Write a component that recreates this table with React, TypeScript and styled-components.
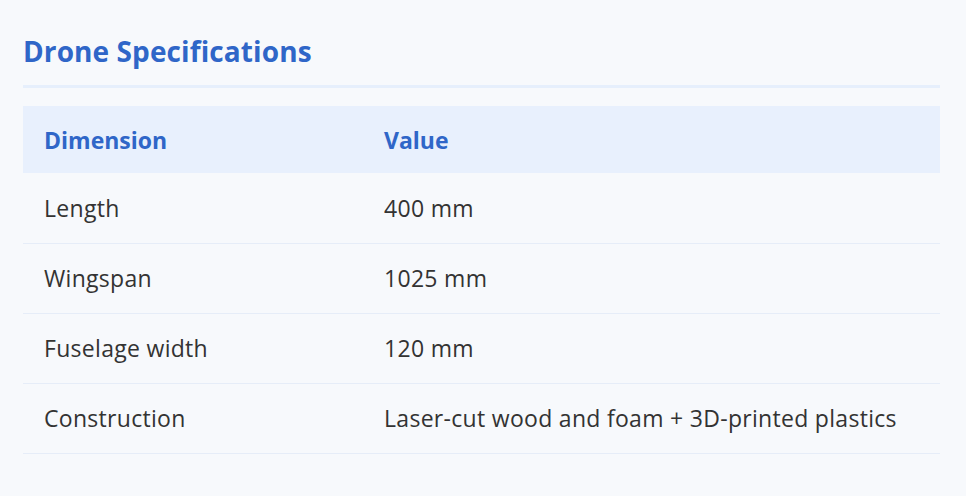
import React from "react";
import styled, { createGlobalStyle } from "styled-components";

const Global = createGlobalStyle`
  html, body { margin: 0; padding: 0; background: #f7f9fc; }
  body { font-family: "Open Sans", "Noto Sans", sans-serif; color: #333333; }
`;

const Page = styled.div`
  width: 966px;
  height: 496px;
  box-sizing: border-box;
  padding: 33px 26px 0 23px;
  background: #f7f9fc;
`;

const Title = styled.h2`
  margin: 0;
  font-size: 28px;
  line-height: 36px;
  font-weight: 700;
  color: #2f66c8;
  padding-bottom: 16px;
  border-bottom: 3px solid #e6effc;
  margin-bottom: 18px;
  letter-spacing: 0.1px;
`;

const Table = styled.table`
  width: 100%;
  border-collapse: collapse;
  font-size: 23px;
`;

const HeadCell = styled.th<{ $w?: string }>`
  background: #e8f0fd;
  color: #2f66c8;
  font-weight: 700;
  text-align: left;
  height: 67px;
  padding: 0 21px;
  box-sizing: border-box;
  width: ${(p) => p.$w || "auto"};
`;

const Row = styled.tr`
  border-bottom: 1px solid #e6edf8;
`;

const Cell = styled.td`
  height: 70px;
  padding: 0 21px;
  box-sizing: border-box;
  color: #333333;
  letter-spacing: 0.3px;
`;

const rows: [string, string][] = [
  ["Length", "400 mm"],
  ["Wingspan", "1025 mm"],
  ["Fuselage width", "120 mm"],
  ["Construction", "Laser-cut wood and foam + 3D-printed plastics"],
];

export default function App() {
  return (
    <Page>
      <Global />
      <Title>Drone Specifications</Title>
      <Table>
        <thead>
          <tr>
            <HeadCell $w="340px">Dimension</HeadCell>
            <HeadCell>Value</HeadCell>
          </tr>
        </thead>
        <tbody>
          {rows.map(([k, v]) => (
            <Row key={k}>
              <Cell>{k}</Cell>
              <Cell>{v}</Cell>
            </Row>
          ))}
        </tbody>
      </Table>
    </Page>
  );
}
